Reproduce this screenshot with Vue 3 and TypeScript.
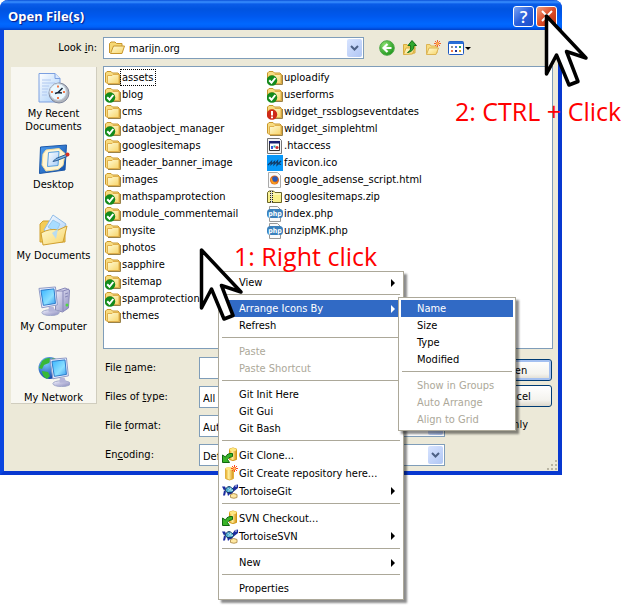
<script setup lang="ts">
import { ref } from 'vue'

interface Entry {
  name: string
  icon: string
  badge?: string
}

interface MenuItem {
  label?: string
  icon?: string
  arrow?: boolean
  disabled?: boolean
  active?: boolean
}

const entries: Entry[] = [
  { name: 'assets', icon: 'folder' },
  { name: 'blog', icon: 'folder-ok' },
  { name: 'cms', icon: 'folder' },
  { name: 'dataobject_manager', icon: 'folder-ok' },
  { name: 'googlesitemaps', icon: 'folder' },
  { name: 'header_banner_image', icon: 'folder' },
  { name: 'images', icon: 'folder' },
  { name: 'mathspamprotection', icon: 'folder-ok' },
  { name: 'module_commentemail', icon: 'folder-ok' },
  { name: 'mysite', icon: 'folder' },
  { name: 'photos', icon: 'folder' },
  { name: 'sapphire', icon: 'folder' },
  { name: 'sitemap', icon: 'folder-ok' },
  { name: 'spamprotection', icon: 'folder-ok' },
  { name: 'themes', icon: 'folder' },
]

const moreEntries: Entry[] = [
  { name: 'uploadify', icon: 'folder-ok' },
  { name: 'userforms', icon: 'folder-ok' },
  { name: 'widget_rssblogseventdates', icon: 'folder-warn' },
  { name: 'widget_simplehtml', icon: 'folder' },
  { name: '.htaccess', icon: 'file-app' },
  { name: 'favicon.ico', icon: 'file-ico' },
  { name: 'google_adsense_script.html', icon: 'file-html' },
  { name: 'googlesitemaps.zip', icon: 'file-zip' },
  { name: 'index.php', icon: 'file-php', badge: 'php' },
  { name: 'unzipMK.php', icon: 'file-php', badge: 'php' },
]

const places: Entry[] = [
  { name: 'My Recent Documents', icon: 'recent' },
  { name: 'Desktop', icon: 'desktop' },
  { name: 'My Documents', icon: 'documents' },
  { name: 'My Computer', icon: 'computer' },
  { name: 'My Network', icon: 'network' },
]

const contextMenu: MenuItem[] = [
  { label: 'View', arrow: true },
  {},
  { label: 'Arrange Icons By', arrow: true, active: true },
  { label: 'Refresh' },
  {},
  { label: 'Paste', disabled: true },
  { label: 'Paste Shortcut', disabled: true },
  {},
  { label: 'Git Init Here' },
  { label: 'Git Gui' },
  { label: 'Git Bash' },
  {},
  { label: 'Git Clone...', icon: 'checkout' },
  { label: 'Git Create repository here...', icon: 'create' },
  { label: 'TortoiseGit', icon: 'tortoise', arrow: true },
  {},
  { label: 'SVN Checkout...', icon: 'checkout' },
  { label: 'TortoiseSVN', icon: 'tortoise', arrow: true },
  {},
  { label: 'New', arrow: true },
  {},
  { label: 'Properties' },
]

const arrangeMenu: MenuItem[] = [
  { label: 'Name', active: true },
  { label: 'Size' },
  { label: 'Type' },
  { label: 'Modified' },
  {},
  { label: 'Show in Groups', disabled: true },
  { label: 'Auto Arrange', disabled: true },
  { label: 'Align to Grid', disabled: true },
]

const selected = ref('assets')
const fileName = ref('')
const readOnly = ref(false)
</script>

<template>
  <main class="stage">
    <svg class="sprites" aria-hidden="true">
      <defs>
        <linearGradient id="g-folder" x1="0" y1="0" x2="1" y2="1">
          <stop offset="0" stop-color="#fffcd8" />
          <stop offset="1" stop-color="#f7d468" />
        </linearGradient>
        <linearGradient id="g-screen" x1="0" y1="0" x2="1" y2="1">
          <stop offset="0" stop-color="#38b4ff" />
          <stop offset="0.6" stop-color="#8ce0ff" />
          <stop offset="1" stop-color="#3a9cf0" />
        </linearGradient>
        <linearGradient id="g-paper" x1="0" y1="0" x2="1" y2="1">
          <stop offset="0" stop-color="#ffffff" />
          <stop offset="1" stop-color="#a4ccf8" />
        </linearGradient>
        <linearGradient id="g-frame" x1="0" y1="0" x2="1" y2="1">
          <stop offset="0" stop-color="#4c9cf0" />
          <stop offset="1" stop-color="#1450a8" />
        </linearGradient>
        <linearGradient id="g-metal" x1="0" y1="0" x2="1" y2="1">
          <stop offset="0" stop-color="#f4f4ff" />
          <stop offset="1" stop-color="#8888bc" />
        </linearGradient>
        <linearGradient id="g-gold" x1="0" y1="0" x2="1" y2="0">
          <stop offset="0" stop-color="#e8a820" />
          <stop offset="0.4" stop-color="#fff0a0" />
          <stop offset="1" stop-color="#d89010" />
        </linearGradient>
        <radialGradient id="g-green" cx="0.35" cy="0.3" r="0.8">
          <stop offset="0" stop-color="#8be070" />
          <stop offset="1" stop-color="#159015" />
        </radialGradient>
        <radialGradient id="g-globe" cx="0.35" cy="0.3" r="0.8">
          <stop offset="0" stop-color="#7cc8ff" />
          <stop offset="1" stop-color="#0838a0" />
        </radialGradient>
      </defs>

      <symbol id="folder" viewBox="0 0 16 16">
        <path d="M15.500 5v9.500H3" fill="none" stroke="#9a8248" />
        <path d="M.5 3 2 1.500h4L7.500 3H13l1.500 1.500v9H2L.5 12z" fill="#f8dc80" stroke="#c8962c" />
        <path d="M2.500 5.500H7l1-1h6v9H2.500z" fill="url(#g-folder)" stroke="#e0b04c" />
      </symbol>
      <symbol id="folder-ok" viewBox="0 0 16 16">
        <use href="#folder" width="16" height="16" />
        <circle cx="5" cy="10.500" r="5.200" fill="#138a1c" />
        <path d="M2.200 10.300 4.500 12.800 8.300 8" fill="none" stroke="#fff" stroke-width="2" />
      </symbol>
      <symbol id="folder-warn" viewBox="0 0 16 16">
        <use href="#folder" width="16" height="16" />
        <circle cx="5" cy="10.500" r="5.200" fill="#cf2a18" />
        <path d="M4 7h2v4.500H4zM4 12.500h2v1.800H4z" fill="#fff" />
      </symbol>
      <symbol id="folder-open" viewBox="0 0 16 16">
        <path d="M.5 13V3.500L2 2h4l1.500 1.500H13V6" fill="#f6d874" stroke="#c8962c" />
        <path d="M1.500 13.500 4.500 6h11L13 13.500z" fill="url(#g-folder)" stroke="#c8962c" />
      </symbol>
      <symbol id="file-app" viewBox="0 0 16 16">
        <path d="M.5.500h12l2 2v13H.500z" fill="#f4f4f4" stroke="#777" />
        <path d="M2.500 3.500h10v9h-10z" fill="#fff" stroke="#333" />
        <path d="M2 3h11v2.500H2z" fill="#182070" />
        <path d="M4 8h2v3H4z" fill="#3858d8" />
        <path d="M6.500 7.500h2v2h-2z" fill="#20a8a0" />
        <circle cx="10" cy="9.500" r="1.600" fill="#d03030" />
      </symbol>
      <symbol id="file-ico" viewBox="0 0 16 16">
        <path d="M0 0h16v16H0z" fill="#0898f8" />
        <path d="M1 10 4.500 6.500 4 9.500l3.500-3-.5 3L10.500 6 10 10l4-4-3 2.500 3 1" fill="none" stroke="#123c68" stroke-width="1.200" />
      </symbol>
      <symbol id="file-html" viewBox="0 0 16 16">
        <path d="M1.500.500h9l3 3v12h-12z" fill="#fafafa" stroke="#aaa" />
        <circle cx="7.500" cy="8" r="4.500" fill="#e06818" />
        <circle cx="8" cy="7" r="2.800" fill="#2858b8" />
        <path d="M3.500 5.500q2 1 2 3t5 2q-3 3-6 0z" fill="#f8a020" />
      </symbol>
      <symbol id="file-zip" viewBox="0 0 16 16">
        <path d="M.5 3.500 2 2h4.500L8 3.500h6.500v10H.5z" fill="#f8f088" stroke="#6a6428" />
        <path d="M1.500 5h12.500" stroke="#fffde0" />
        <path d="M4.500 2v12" stroke="#222" stroke-width="3" stroke-dasharray="1 1" />
        <path d="M4.500 2v12" stroke="#ddd" />
      </symbol>
      <symbol id="file-php" viewBox="0 0 16 16">
        <path d="M2.500.500h8l3 3v12h-11z" fill="#fafafa" stroke="#999" />
        <rect x="0" y="3" width="16" height="9" rx="3.500" fill="#3a80bc" />
      </symbol>

      <symbol id="recent" viewBox="0 0 32 32">
        <path d="M1 1.500h16l5 5V30H1z" fill="url(#g-paper)" stroke="#7ca0e0" />
        <path d="M17 1.500v5h5" fill="#d8e8ff" stroke="#7ca0e0" />
        <path d="M4 8h9M4 11h13M4 14h7M4 17h6M4 20h5M4 23h5" stroke="#b0c8f0" />
        <circle cx="21" cy="21" r="10" fill="#b0b4bc" stroke="#80889c" />
        <circle cx="20" cy="20" r="8.300" fill="#eaf8ff" stroke="#c8d4e0" />
        <path d="M20 13.500v2M20 25v2M13 20h2M25 20h2" stroke="#f07848" stroke-width="2" />
        <path d="M24.500 16 20 20.500l-3 1M20 20.500l4 .5" fill="none" stroke="#182838" stroke-width="1.500" />
      </symbol>
      <symbol id="desktop" viewBox="0 0 32 32">
        <path d="M2.500 4 28.500 2 27 27 1.500 30.500z" fill="url(#g-frame)" stroke="#1c58a8" />
        <path d="M8 7 21 5.500l6 5-2 12-5 4-12 1.500L4 22l1-11z" fill="#fff6d4" stroke="#f4dc98" />
        <path d="M10.500 9.500 21 8.500l-1 14-10.500 1z" fill="url(#g-paper)" stroke="#58a0e0" />
        <path d="m15 18.500 3-3 10-4 1 2-10 4z" fill="#78b4e8" stroke="#305c90" />
        <circle cx="29.500" cy="11.500" r="2" fill="#d83020" />
      </symbol>
      <symbol id="documents" viewBox="0 0 32 32">
        <path d="M2 28V10l3-3h6l2 3h14v18z" fill="#f4cc58" stroke="#d0a030" />
        <path d="M15 1 28 10 20 27 6 16z" fill="url(#g-paper)" stroke="#90bce8" />
        <path d="m15 6 7 4-4 8-8-5z" fill="#a8dcff" stroke="#98c8ec" />
        <path d="M3 19q9-5 17-3l9-4-4 16-20 3z" fill="url(#g-folder)" stroke="#d0a030" />
        <path d="M14 19 20 15l-2 10z" fill="#b8dcf0" />
      </symbol>
      <symbol id="monitor" viewBox="0 0 32 32">
        <ellipse cx="13" cy="28" rx="9" ry="3" fill="url(#g-metal)" stroke="#a0a8c8" />
        <path d="M11 22h5l2 5h-7z" fill="#b4b4d8" />
        <path d="M1 3 18 1.500l2 18.500L4 23z" fill="#e8ecff" stroke="#8c98c4" />
        <path d="M3 5 16.500 3.500l1.500 15L5.500 20.500z" fill="url(#g-screen)" stroke="#2878c8" />
      </symbol>
      <symbol id="computer" viewBox="0 0 32 32">
        <path d="m18 6 9-3 4.500 2-1 18-6 4-7-2z" fill="url(#g-metal)" stroke="#8888b8" />
        <path d="M19 6h6l6-2M25 6v20M27 9l3-1M27 12l3-1" fill="none" stroke="#8888b8" />
        <circle cx="29" cy="20" r="1.500" fill="#50d840" />
        <use href="#monitor" width="31" height="32" />
      </symbol>
      <symbol id="network" viewBox="0 0 32 32">
        <circle cx="11.500" cy="12" r="11" fill="url(#g-globe)" />
        <path d="M4 5q6-5 9-2l-2 4-5 2-2 4-3-1zM4 15l6 1 2 4-3 3Q4 20 4 15M14 2q4 0 7 4l-5 2z" fill="#38b838" />
        <use href="#monitor" x="11" y="0" width="31" height="32" />
      </symbol>

      <symbol id="back" viewBox="0 0 16 16">
        <circle cx="8" cy="8" r="7.300" fill="url(#g-green)" stroke="#50a848" />
        <path d="M12.500 8H5M8.500 4 4.500 8l4 4" fill="none" stroke="#fff" stroke-width="2.200" />
      </symbol>
      <symbol id="up" viewBox="0 0 16 16">
        <path d="M1.500 14V4.500H5l1 1.500h7V13z" fill="#f4d468" stroke="#d8ac40" />
        <path d="M1.500 14.500 4 8h9l-2.500 6z" fill="url(#g-folder)" stroke="#d8ac40" />
        <path d="M5.500 12.500Q9.500 11 8.500 5.500H6L10 .500l4.500 5H12q0 6-6.500 7z" fill="#30a830" stroke="#107018" />
      </symbol>
      <symbol id="new-folder" viewBox="0 0 16 16">
        <path d="M1.500 14V4.500H5l1 1.500h6V13z" fill="#f8dc80" stroke="#dcb454" />
        <path d="M1.500 14.500 4 8h9.500L11 14.500z" fill="url(#g-folder)" stroke="#dcb454" />
        <path d="M12.500 0v7M9 3.500h7M10 1l5 5M15 1l-5 5" stroke="#f06030" />
        <circle cx="12.500" cy="3.500" r="1.500" fill="#ffb050" />
      </symbol>
      <symbol id="views" viewBox="0 0 16 16">
        <rect x=".5" y="1.500" width="15" height="13" rx="1" fill="#fff" stroke="#1c58c0" />
        <path d="M1 1.500h14V4H1z" fill="#2870d8" />
        <path d="M3 6h2v2H3z" fill="#909090" />
        <path d="M7 6h2v2H7z" fill="#4878e0" />
        <path d="M11 6h2v2h-2z" fill="#28a050" />
        <path d="M3 10h2v2H3z" fill="#f07848" />
        <path d="M7 10h2v2H7z" fill="#203090" />
        <path d="M11 10h2v2h-2z" fill="#e0a820" />
      </symbol>

      <symbol id="checkout" viewBox="0 0 16 16">
        <path d="M7.500 2q3.500-2 7 0v10.500q-3.500 2-7 0z" fill="url(#g-gold)" stroke="#d09818" />
        <ellipse cx="11" cy="2.500" rx="3.500" ry="1.500" fill="#ffe880" />
        <path d="M10.500 6.500Q5 6 3.500 10L.500 8v7.500h7L5.500 12.500q0-2 5-3z" fill="#38b428" stroke="#106810" />
      </symbol>
      <symbol id="create" viewBox="0 0 16 16">
        <path d="M3.500 3.500q4-2 8 0v10q-4 3-8 0z" fill="url(#g-gold)" stroke="#e0b040" />
        <ellipse cx="7.500" cy="3.500" rx="4" ry="1.500" fill="#ffe880" />
        <path d="M12.500 0v7M9 3.500h7M10 1l5 5M15 1l-5 5" stroke="#ff4820" />
        <circle cx="12.500" cy="3.500" r="1.300" fill="#ffc860" />
      </symbol>
      <symbol id="tortoise" viewBox="0 0 16 16">
        <path d="M0 3.500h3l1 2-2 2 2 1-1 4H1l1-5zM10 6l3-4 3-.5V5L11 9zM5 9h6l-1 3-2-1-2 2z" fill="#1c2ca0" />
        <path d="M3 7q3.500-7 9 0l-2 2.500H5z" fill="#48a8cc" stroke="#183868" />
        <path d="m5.500 5 2 1.500-1 2M9 4.500 8 7l3 .5" stroke="#b8e0ec" fill="none" />
        <circle cx="14" cy="3" r=".8" fill="#fff" />
        <path d="M8.500 11.500q3-2 6.500 0v3q-3 1.500-6.500 0z" fill="#ffe8a0" stroke="#b89858" />
      </symbol>
      <symbol id="cursor" viewBox="0 0 46 76">
        <path d="M2.500 3v58l10-19L25 72l9-3.500L22.500 38.500 42 45z" fill="#fff" stroke="#000" stroke-width="3.500" stroke-linejoin="round" />
      </symbol>
    </svg>

    <section class="dialog" aria-labelledby="dialog-title">
      <header class="titlebar">
        <h1 id="dialog-title">Open File(s)</h1>
        <button class="caption help" type="button" aria-label="Help">?</button>
        <button class="caption close" type="button" aria-label="Close">
          <svg viewBox="0 0 12 12"><path d="m1 1 10 10M11 1 1 11" stroke="#fff" stroke-width="2" /></svg>
        </button>
      </header>

      <div class="body">
        <div class="left">
          <label class="look-label" for="look-in">Look <u>i</u>n:</label>
          <nav class="places">
            <button v-for="place in places" :key="place.name" class="place" type="button">
              <svg><use :href="'#' + place.icon" /></svg>
              <span>{{ place.name }}</span>
            </button>
          </nav>
        </div>

        <div class="right">
          <div class="toolbar">
            <div class="combo look">
              <svg class="combo-icon"><use href="#folder-open" /></svg>
              <select id="look-in" class="with-icon"><option>marijn.org</option></select>
              <span class="drop"><svg viewBox="0 0 9 6"><path d="m1 1 3.500 3.500L8 1" /></svg></span>
            </div>
            <div class="tools">
              <button type="button" aria-label="Back"><svg><use href="#back" /></svg></button>
              <button type="button" aria-label="Up one level"><svg><use href="#up" /></svg></button>
              <button type="button" aria-label="New folder"><svg><use href="#new-folder" /></svg></button>
              <button type="button" aria-label="Views" class="views">
                <svg><use href="#views" /></svg><i class="caret"></i>
              </button>
            </div>
          </div>

          <div class="files">
            <ul v-for="(column, index) in [entries, moreEntries]" :key="index">
              <li v-for="entry in column" :key="entry.name" @click="selected = entry.name">
                <svg viewBox="0 0 16 16">
                  <use :href="'#' + entry.icon" width="16" height="16" />
                  <text v-if="entry.badge" class="badge" x="8" y="10" text-anchor="middle">{{ entry.badge }}</text>
                </svg>
                <span :class="{ focused: entry.name === selected }">{{ entry.name }}</span>
              </li>
            </ul>
          </div>

          <form class="form" @submit.prevent>
            <div class="fields">
              <label for="file-name">File <u>n</u>ame:</label>
              <div class="combo">
                <input id="file-name" v-model="fileName" type="text" />
                <span class="drop"><svg viewBox="0 0 9 6"><path d="m1 1 3.500 3.500L8 1" /></svg></span>
              </div>
              <label for="file-type">Files of <u>t</u>ype:</label>
              <div class="combo">
                <select id="file-type"><option>All types</option></select>
                <span class="drop"><svg viewBox="0 0 9 6"><path d="m1 1 3.500 3.500L8 1" /></svg></span>
              </div>
              <label for="file-format">File <u>f</u>ormat:</label>
              <div class="combo">
                <select id="file-format"><option>Auto</option></select>
                <span class="drop"><svg viewBox="0 0 9 6"><path d="m1 1 3.500 3.500L8 1" /></svg></span>
              </div>
              <label for="encoding">En<u>c</u>oding:</label>
              <div class="combo">
                <select id="encoding"><option>Default</option></select>
                <span class="drop"><svg viewBox="0 0 9 6"><path d="m1 1 3.500 3.500L8 1" /></svg></span>
              </div>
            </div>
            <div class="actions">
              <button class="push primary" type="submit">Open</button>
              <button class="push" type="button">Cancel</button>
              <label class="check"><input v-model="readOnly" type="checkbox" />Read only</label>
            </div>
          </form>
        </div>
      </div>
      <svg class="grip" viewBox="0 0 11 11">
        <path d="M9 1h2v2H9zM5 5h2v2H5zM9 5h2v2H9zM1 9h2v2H1zM5 9h2v2H5zM9 9h2v2H9z" fill="#b8b4a2" />
      </svg>
    </section>

    <div class="menu context" role="menu">
      <template v-for="(item, index) in contextMenu" :key="index">
        <button
          v-if="item.label"
          type="button"
          role="menuitem"
          :disabled="item.disabled"
          :class="{ active: item.active, iconed: item.icon }"
        >
          <span class="slot"><svg v-if="item.icon"><use :href="'#' + item.icon" /></svg></span>
          <span class="label">{{ item.label }}</span>
          <i v-if="item.arrow" class="arrow"></i>
        </button>
        <hr v-else />
      </template>
    </div>

    <div class="menu submenu" role="menu">
      <template v-for="(item, index) in arrangeMenu" :key="index">
        <button v-if="item.label" type="button" role="menuitem" :disabled="item.disabled" :class="{ active: item.active }">
          <span class="label">{{ item.label }}</span>
        </button>
        <hr v-else />
      </template>
    </div>

    <p class="note first">1: Right click</p>
    <p class="note second">2: CTRL + Click</p>
    <svg class="pointer at-list"><use href="#cursor" /></svg>
    <svg class="pointer at-close"><use href="#cursor" /></svg>
  </main>
</template>

<style>
body {
  margin: 0;
  background: #fff;
}
</style>

<style scoped>
.stage {
  position: relative;
  min-height: 605px;
  padding-right: 62px;
  box-sizing: border-box;
  overflow: hidden;
  font: 11px/13px "DejaVu Sans Condensed", "DejaVu Sans", sans-serif;
  color: #000;
}
.sprites {
  position: absolute;
  width: 0;
  height: 0;
}
button,
input,
select {
  font: inherit;
  color: inherit;
  margin: 0;
  padding: 0;
  border: 0;
  background: none;
  box-sizing: border-box;
}
.dialog {
  position: relative;
  border: solid #0a46e0;
  border-width: 0 4px 4px;
  border-color: #0a46e0 #0838d0 #0838d0 #0a46e0;
  border-radius: 8px 8px 0 0;
  background: #ece9d8;
}
.titlebar {
  display: flex;
  align-items: center;
  gap: 2px;
  height: 30px;
  margin: 0 -4px;
  padding: 2px 5px 0 8px;
  box-sizing: border-box;
  border-radius: 8px 8px 0 0;
  background: linear-gradient(#0a50d8 0, #3a90ff 2px, #0a5ce8 4px, #0054e0 9px, #0058ee 16px, #0068ff 24px, #0060f8 27px, #0040c8 30px);
}
h1 {
  flex: 1;
  margin: 0;
  font: 700 13px/20px "Noto Sans", sans-serif;
  color: #fff;
  text-shadow: 1px 1px 1px #0a1883;
}
.caption {
  display: flex;
  align-items: center;
  justify-content: center;
  width: 21px;
  height: 21px;
  border: 1px solid #fff;
  border-radius: 3px;
  color: #fff;
  font: 600 17px/19px "Open Sans", sans-serif;
  background: linear-gradient(135deg, #7ba4f4, #2a60dc 50%, #1c4cc8);
}
.close {
  background: linear-gradient(135deg, #f0a080, #dc4c28 50%, #b83010);
}
.close svg {
  width: 12px;
  height: 12px;
}
.body {
  display: flex;
  gap: 6px;
  padding: 7px 5px 5px 7px;
}
.left {
  display: flex;
  flex-direction: column;
  gap: 8px;
  width: 86px;
  flex: none;
}
.look-label {
  line-height: 22px;
  text-align: right;
}
.places {
  height: 337px;
  padding-top: 5px;
  box-sizing: border-box;
  border: solid #d0cdbe;
  border-width: 0 1px 1px 0;
  background: #f8f7f1;
}
.place {
  display: flex;
  flex-direction: column;
  align-items: center;
  gap: 3px;
  width: 100%;
  height: 71px;
  padding: 0 4px;
}
.place:last-child {
  height: 60px;
}
.place svg {
  width: 32px;
  height: 32px;
  flex: none;
}
.right {
  flex: 1;
  min-width: 0;
}
.toolbar {
  display: flex;
  gap: 15px;
  height: 22px;
  margin-bottom: 7px;
}
.combo {
  display: flex;
  align-items: center;
  height: 22px;
  padding: 1px;
  box-sizing: border-box;
  border: 1px solid #7f9db9;
  background: #fff;
}
.look {
  width: 261px;
}
.combo-icon {
  width: 16px;
  height: 16px;
  margin-left: 4px;
}
.combo input,
.combo select {
  flex: 1;
  min-width: 0;
  height: 18px;
  padding-left: 2px;
  appearance: none;
  outline: 0;
}
.combo select.with-icon {
  padding-left: 4px;
}
.drop {
  display: flex;
  align-items: center;
  justify-content: center;
  width: 15px;
  height: 18px;
  border-radius: 2px;
  background: linear-gradient(135deg, #d8e4ff, #b0c6f4);
  pointer-events: none;
}
.drop svg {
  width: 9px;
  height: 6px;
  fill: none;
  stroke: #4d6185;
  stroke-width: 2;
}
.tools {
  display: flex;
  align-items: center;
  gap: 7px;
}
.tools button {
  display: flex;
  align-items: center;
  gap: 1px;
}
.tools svg {
  width: 16px;
  height: 16px;
}
.caret {
  border: 3px solid transparent;
  border-top-color: #000;
  border-bottom: 0;
}
.files {
  display: flex;
  height: 283px;
  padding: 2px 1px;
  box-sizing: border-box;
  border: 1px solid #7f9db9;
  background: #fff;
}
ul {
  width: 162px;
  margin: 0;
  padding: 0;
  list-style: none;
}
li {
  display: flex;
  align-items: center;
  height: 17px;
  white-space: nowrap;
}
li svg {
  width: 16px;
  height: 16px;
  flex: none;
}
li span {
  padding: 1px;
}
.badge {
  font: 700 7px "DejaVu Sans Condensed", sans-serif;
  fill: #fff;
}
.focused {
  outline: 1px dotted #000;
}
.form {
  display: flex;
  justify-content: space-between;
  margin-top: 8px;
}
.fields {
  display: grid;
  grid-template-columns: 94px 246px;
  gap: 7px 0;
  padding-left: 2px;
  line-height: 22px;
}
.actions {
  display: flex;
  flex-direction: column;
  align-items: flex-end;
  gap: 4px;
  padding: 2px 1px 0 0;
}
.push {
  width: 76px;
  height: 22px;
  border: 1px solid #003c74;
  border-radius: 3px;
  background: linear-gradient(#fff, #f4f3ee 70%, #dcd8cc);
}
.primary {
  box-shadow: inset 0 0 0 2px #a4c0f0;
}
.check {
  display: flex;
  align-items: center;
  gap: 5px;
  margin: 7px 24px 0 0;
}
.check input {
  width: 13px;
  height: 13px;
}
.grip {
  position: absolute;
  right: 1px;
  bottom: 1px;
  width: 11px;
  height: 11px;
}
.menu {
  position: absolute;
  padding: 2px;
  box-sizing: border-box;
  border: 1px solid #aca899;
  background: #fff;
  box-shadow: 3px 3px 2px rgba(0, 0, 0, 0.45);
}
.context {
  left: 218px;
  top: 271px;
  width: 186px;
}
.submenu {
  left: 398px;
  top: 297px;
  width: 118px;
}
.menu button {
  display: flex;
  align-items: center;
  width: 100%;
  height: 17px;
  padding-right: 6px;
  text-align: left;
  white-space: nowrap;
}
.menu .iconed {
  height: 18px;
}
.submenu button {
  padding-left: 16px;
}
.menu .active {
  color: #fff;
  background: #316ac5;
}
.menu button:disabled {
  color: #aca899;
}
.menu hr {
  height: 1px;
  margin: 3px 1px 5px;
  border: 0;
  background: #aca899;
}
.slot {
  display: flex;
  width: 17px;
  padding-left: 1px;
  flex: none;
  box-sizing: content-box;
}
.slot svg {
  width: 16px;
  height: 16px;
}
.label {
  flex: 1;
}
.arrow {
  border: 4px solid transparent;
  border-left-color: currentColor;
  border-right: 0;
}
.note {
  position: absolute;
  margin: 0;
  font: 25px/30px "Open Sans", sans-serif;
  color: #f00;
  white-space: nowrap;
}
.first {
  left: 234px;
  top: 241px;
}
.second {
  left: 455px;
  top: 96px;
}
.pointer {
  position: absolute;
  width: 46px;
  height: 76px;
}
.at-list {
  left: 199px;
  top: 247px;
}
.at-close {
  left: 544px;
  top: 13px;
}
</style>
